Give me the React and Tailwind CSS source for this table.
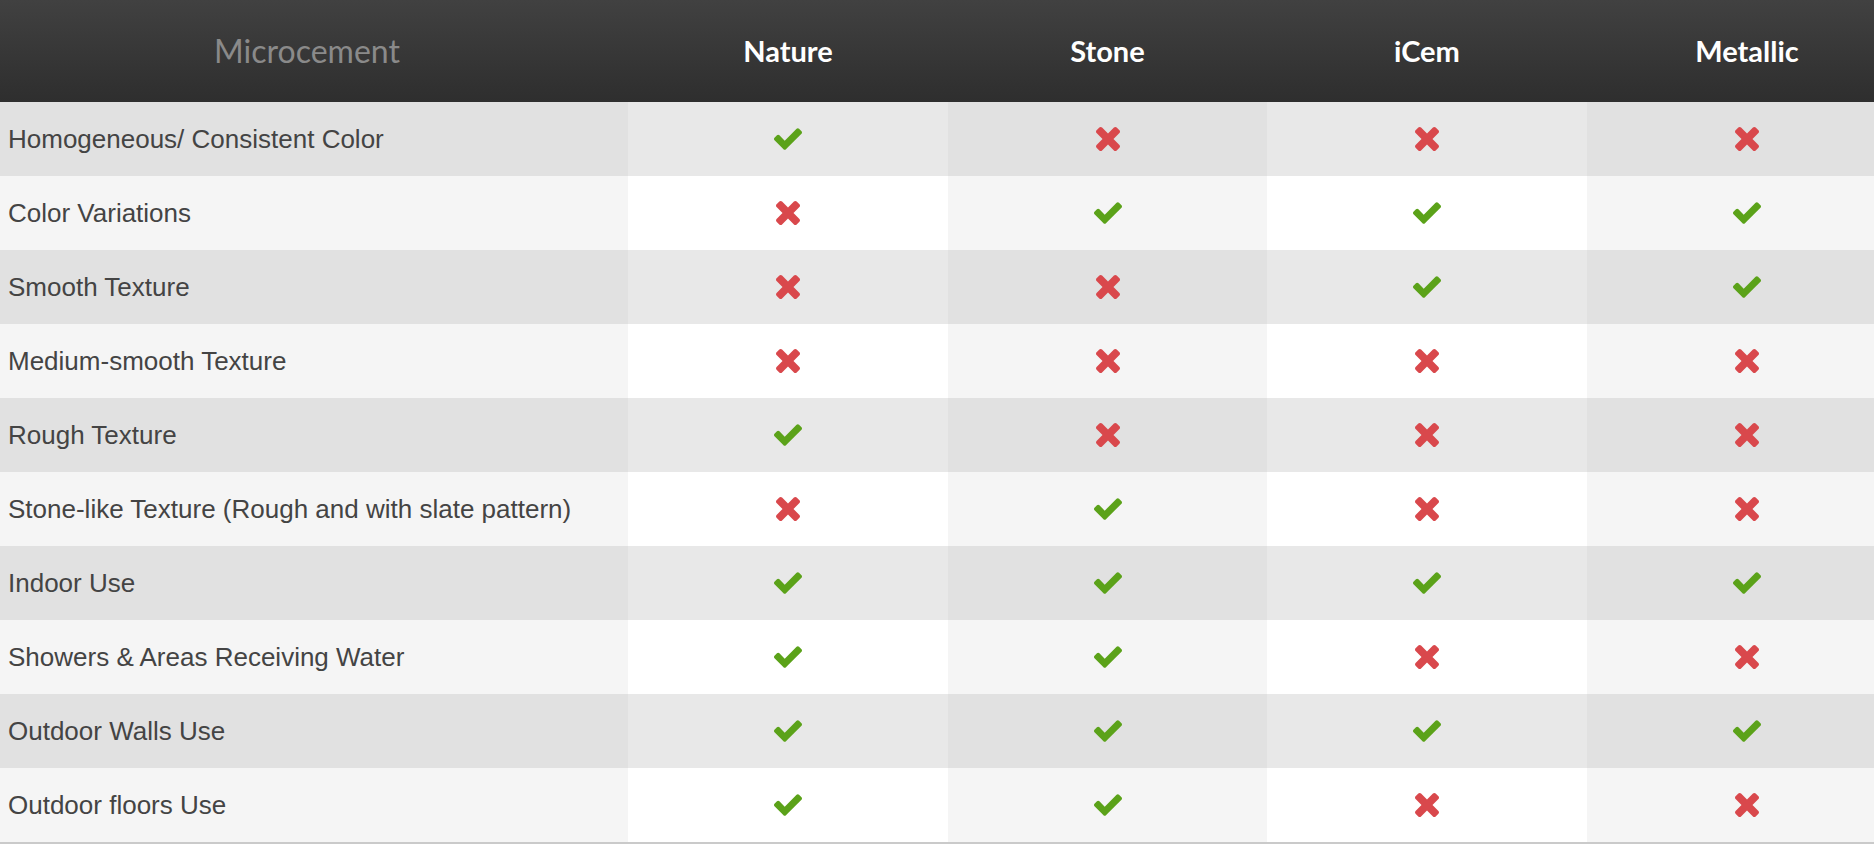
import React from "react";

const rows = [
  ["Homogeneous/ Consistent Color", [1, 0, 0, 0]],
  ["Color Variations", [0, 1, 1, 1]],
  ["Smooth Texture", [0, 0, 1, 1]],
  ["Medium-smooth Texture", [0, 0, 0, 0]],
  ["Rough Texture", [1, 0, 0, 0]],
  ["Stone-like Texture (Rough and with slate pattern)", [0, 1, 0, 0]],
  ["Indoor Use", [1, 1, 1, 1]],
  ["Showers & Areas Receiving Water", [1, 1, 0, 0]],
  ["Outdoor Walls Use", [1, 1, 1, 1]],
  ["Outdoor floors Use", [1, 1, 0, 0]],
];

const cols = ["Nature", "Stone", "iCem", "Metallic"];
const widths = ["w-[320px]", "w-[319px]", "w-[320px]", "w-[320px]"];

function Check() {
  return (
    <svg viewBox="121 334 1550 1188" className="w-[28px] h-[22px]">
      <path
        fill="#5ba219"
        d="M1671 566q0 40-28 68l-724 724-136 136q-28 28-68 28t-68-28l-136-136-362-362q-28-28-28-68t28-68l136-136q28-28 68-28t68 28l294 295 656-657q28-28 68-28t68 28l136 136q28 28 28 68z"
      />
    </svg>
  );
}

function Cross() {
  return (
    <svg viewBox="110 366 1188 1188" className="w-[24px] h-[24px]">
      <path
        fill="#d9484c"
        d="M1298 1322q0 40-28 68l-136 136q-28 28-68 28t-68-28l-294-294-294 294q-28 28-68 28t-68-28l-136-136q-28-28-28-68t28-68l294-294-294-294q-28-28-28-68t28-68l136-136q28-28 68-28t68 28l294 294 294-294q28-28 68-28t68 28l136 136q28 28 28 68t-28 68l-294 294 294 294q28 28 28 68z"
      />
    </svg>
  );
}

export default function App() {
  return (
    <div className="w-[1874px] h-[844px] overflow-hidden bg-white">
      <div className="w-[1907px] border-b-2 border-[#cacaca]">
        <div className="flex h-[102px] bg-gradient-to-b from-[#414141] to-[#2e2e2e]">
          <div
            className="w-[628px] flex items-center justify-center pr-[14px] text-[32px] text-[#8a8a8a]"
            style={{ fontFamily: "Lato, 'Open Sans', sans-serif" }}
          >
            Microcement
          </div>
          {cols.map((c, i) => (
            <div
              key={c}
              className={`${widths[i]} flex items-center justify-center text-[29px] font-bold text-white`}
              style={{ fontFamily: "Lato, 'Open Sans', sans-serif" }}
            >
              {c}
            </div>
          ))}
        </div>
        {rows.map(([label, vals], r) => {
          const odd = r % 2 === 0;
          return (
            <div key={label} className="flex h-[74px]">
              <div
                className={`w-[628px] flex items-center pl-[8px] text-[26px] text-[#444444] ${
                  odd ? "bg-[#e1e1e1]" : "bg-[#f5f5f5]"
                }`}
                style={{ fontFamily: "'Liberation Sans', Arial, sans-serif" }}
              >
                {label}
              </div>
              {vals.map((v, i) => {
                const alt = i % 2 === 0;
                const bg = odd
                  ? alt
                    ? "bg-[#e8e8e8]"
                    : "bg-[#e1e1e1]"
                  : alt
                  ? "bg-white"
                  : "bg-[#f5f5f5]";
                return (
                  <div
                    key={i}
                    className={`${widths[i]} ${bg} flex items-center justify-center`}
                  >
                    {v ? <Check /> : <Cross />}
                  </div>
                );
              })}
            </div>
          );
        })}
      </div>
    </div>
  );
}
